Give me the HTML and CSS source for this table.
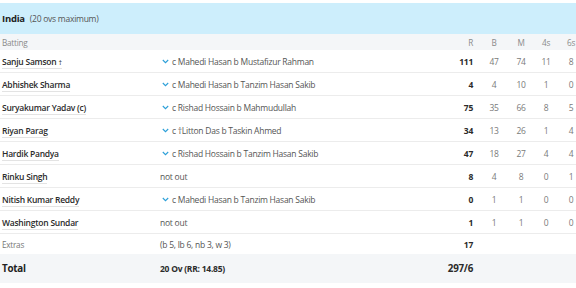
FILE: index.html
```html
<!DOCTYPE html>
<html>
<head>
<meta charset="utf-8">
<link rel="stylesheet" href="styles.css">
</head>
<body>
<div class="card">
  <div class="team-head"><span class="team">India</span><span class="team-sub">(20 ovs maximum)</span></div>
  <div class="row colhead">
    <div class="c-name">Batting</div>
    <div class="c-dis"></div>
    <div class="c-r">R</div>
    <div class="c-n">B</div>
    <div class="c-n">M</div>
    <div class="c-n">4s</div>
    <div class="c-n">6s</div>
  </div>
  <div class="row">
    <div class="c-name"><span class="nm">Sanju Samson <span class="wk">†</span></span></div>
    <div class="c-dis"><span class="chev"><svg width="7" height="5" viewBox="0 0 7 5"><path d="M0.8 1 L3.5 3.7 L6.2 1" fill="none" stroke="#2b9fd8" stroke-width="1.1"/></svg></span>c Mahedi Hasan b Mustafizur Rahman</div>
    <div class="c-r">111</div><div class="c-n">47</div><div class="c-n">74</div><div class="c-n">11</div><div class="c-n">8</div>
  </div>
  <div class="row">
    <div class="c-name"><span class="nm">Abhishek Sharma</span></div>
    <div class="c-dis"><span class="chev"><svg width="7" height="5" viewBox="0 0 7 5"><path d="M0.8 1 L3.5 3.7 L6.2 1" fill="none" stroke="#2b9fd8" stroke-width="1.1"/></svg></span>c Mahedi Hasan b Tanzim Hasan Sakib</div>
    <div class="c-r">4</div><div class="c-n">4</div><div class="c-n">10</div><div class="c-n">1</div><div class="c-n">0</div>
  </div>
  <div class="row">
    <div class="c-name"><span class="nm">Suryakumar Yadav (c)</span></div>
    <div class="c-dis"><span class="chev"><svg width="7" height="5" viewBox="0 0 7 5"><path d="M0.8 1 L3.5 3.7 L6.2 1" fill="none" stroke="#2b9fd8" stroke-width="1.1"/></svg></span>c Rishad Hossain b Mahmudullah</div>
    <div class="c-r">75</div><div class="c-n">35</div><div class="c-n">66</div><div class="c-n">8</div><div class="c-n">5</div>
  </div>
  <div class="row">
    <div class="c-name"><span class="nm">Riyan Parag</span></div>
    <div class="c-dis"><span class="chev"><svg width="7" height="5" viewBox="0 0 7 5"><path d="M0.8 1 L3.5 3.7 L6.2 1" fill="none" stroke="#2b9fd8" stroke-width="1.1"/></svg></span>c †Litton Das b Taskin Ahmed</div>
    <div class="c-r">34</div><div class="c-n">13</div><div class="c-n">26</div><div class="c-n">1</div><div class="c-n">4</div>
  </div>
  <div class="row">
    <div class="c-name"><span class="nm">Hardik Pandya</span></div>
    <div class="c-dis"><span class="chev"><svg width="7" height="5" viewBox="0 0 7 5"><path d="M0.8 1 L3.5 3.7 L6.2 1" fill="none" stroke="#2b9fd8" stroke-width="1.1"/></svg></span>c Rishad Hossain b Tanzim Hasan Sakib</div>
    <div class="c-r">47</div><div class="c-n">18</div><div class="c-n">27</div><div class="c-n">4</div><div class="c-n">4</div>
  </div>
  <div class="row">
    <div class="c-name"><span class="nm">Rinku Singh</span></div>
    <div class="c-dis">not out</div>
    <div class="c-r">8</div><div class="c-n">4</div><div class="c-n">8</div><div class="c-n">0</div><div class="c-n">1</div>
  </div>
  <div class="row">
    <div class="c-name"><span class="nm">Nitish Kumar Reddy</span></div>
    <div class="c-dis"><span class="chev"><svg width="7" height="5" viewBox="0 0 7 5"><path d="M0.8 1 L3.5 3.7 L6.2 1" fill="none" stroke="#2b9fd8" stroke-width="1.1"/></svg></span>c Mahedi Hasan b Tanzim Hasan Sakib</div>
    <div class="c-r">0</div><div class="c-n">1</div><div class="c-n">1</div><div class="c-n">0</div><div class="c-n">0</div>
  </div>
  <div class="row">
    <div class="c-name"><span class="nm">Washington Sundar</span></div>
    <div class="c-dis">not out</div>
    <div class="c-r">1</div><div class="c-n">1</div><div class="c-n">1</div><div class="c-n">0</div><div class="c-n">0</div>
  </div>
  <div class="row extras">
    <div class="c-name">Extras</div>
    <div class="c-dis">(b 5, lb 6, nb 3, w 3)</div>
    <div class="c-r">17</div><div class="c-n"></div><div class="c-n"></div><div class="c-n"></div><div class="c-n"></div>
  </div>
  <div class="row total">
    <div class="c-name">Total</div>
    <div class="c-dis">20 Ov (RR: 14.85)</div>
    <div class="c-r">297/6</div><div class="c-n"></div><div class="c-n"></div><div class="c-n"></div><div class="c-n"></div>
  </div>
</div>
</body>
</html>
```
FILE: styles.css
```css
html, body {
  margin: 0;
  padding: 0;
  background: #ffffff;
  overflow: hidden;
}
body {
  font-family: "Open Sans", "Liberation Sans", sans-serif;
  color: #2b2b2b;
  font-size: 8.5px;
  letter-spacing: -0.25px;
}
.card {
  width: 584px;
  padding-top: 3px;
}
.team-head {
  background: #cdeefc;
  height: 31px;
  display: flex;
  align-items: center;
  padding-left: 2px;
  gap: 5px;
}
.team {
  font-weight: 700;
  font-size: 9.5px;
  color: #222;
}
.team-sub {
  font-size: 8.5px;
  color: #555;
}
.row {
  display: grid;
  grid-template-columns: 158px 282px 38px 28px 26px 24px 26px;
  align-items: center;
  height: 22px;
  border-bottom: 1px solid #ececec;
  padding-left: 2px;
}
.colhead {
  background: #f4f6f8;
  height: 16px;
  border-bottom: none;
  color: #8a8a8a;
  font-size: 8.2px;
}
.c-r {
  text-align: right;
  padding-right: 7px;
  font-weight: 700;
  color: #2b2b2b;
}
.colhead .c-r {
  font-weight: 400;
  color: #8a8a8a;
}
.c-n {
  text-align: center;
  color: #7a7a7a;
}
.colhead .c-n {
  color: #8a8a8a;
}
.c-dis {
  color: #555;
  display: flex;
  align-items: center;
}
.chev {
  display: inline-flex;
  width: 10px;
  margin-left: 2px;
}
.nm {
  font-weight: 600;
  color: #2b2b2b;
  border-bottom: 1px solid #e3e3e3;
  padding-bottom: 1px;
}
.wk {
  font-weight: 400;
  font-size: 7px;
}
.extras {
  height: 20px;
  border-bottom: none;
}
.extras .c-name {
  color: #777;
  font-size: 8.2px;
}
.total {
  background: #f4f6f8;
  height: 29px;
  border-bottom: none;
}
.total .c-name {
  font-weight: 700;
  font-size: 9.8px;
  color: #222;
}
.total .c-dis {
  font-weight: 700;
  color: #2b2b2b;
}
.total .c-r {
  font-size: 9.8px;
}
```
